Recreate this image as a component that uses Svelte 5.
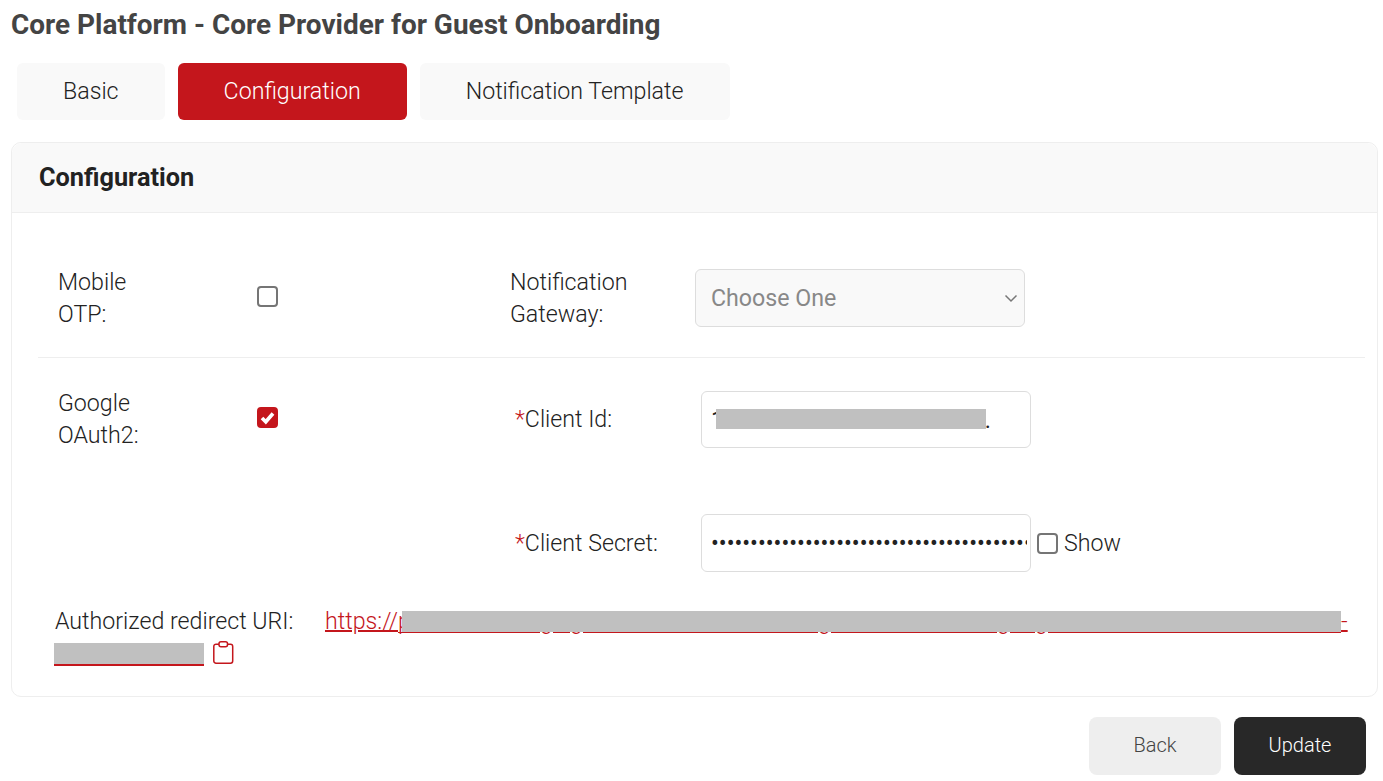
<script>
    let mobileOtp = $state(false);
    let googleAuth = $state(true);
    let showSecret = $state(false);
    let clientId = '100000000000000000000.';
    let clientSecret = 'abcdefghijklmnopqrstuvwxyz0123456789abcdefghijklmnop';
    let activeTab = $state('Configuration');
    const tabs = ['Basic', 'Configuration', 'Notification Template'];
    // descenders that stick out below the grey block of the uri
    const tails = [142, 172, 420, 599, 637];
</script>

<div class="page">
    <h1>Core Platform - Core Provider for Guest Onboarding</h1>

    <div class="tabs">
        {#each tabs as tab (tab)}
            <button class="tab" class:active={activeTab === tab} onclick={() => (activeTab = tab)}>{tab}</button>
        {/each}
    </div>

    <section class="card">
        <header class="card-header">Configuration</header>

        <div class="card-body">
            <div class="row first">
                <label class="label left" for="mobile">Mobile<br>OTP:</label>
                <div class="check-col">
                    <label class="check">
                        <input id="mobile" type="checkbox" bind:checked={mobileOtp}>
                        <span class="box"></span>
                    </label>
                </div>
                <label class="label gateway-label" for="gateway">Notification<br>Gateway:</label>
                <div class="select-wrap">
                    <select id="gateway" disabled>
                        <option>Choose One</option>
                    </select>
                    <svg class="chevron" viewBox="0 0 16 16" width="16" height="16">
                        <path d="M2.500 5.500 8 11l5.500-5.500" fill="none" stroke="#777" stroke-width="1.500"/>
                    </svg>
                </div>
            </div>

            <div class="row second">
                <label class="label left" for="google">Google<br>OAuth2:</label>
                <div class="check-col">
                    <label class="check">
                        <input id="google" type="checkbox" bind:checked={googleAuth}>
                        <span class="box"></span>
                    </label>
                </div>
                <div class="client">
                    <div class="field">
                        <label class="label client-label id-label" for="client-id"><span class="req">*</span>Client Id:</label>
                        <div class="input-wrap">
                            <input id="client-id" type="text" value={clientId}>
                            <span class="id-redact"></span>
                        </div>
                    </div>
                    <div class="field">
                        <label class="label client-label" for="client-secret"><span class="req">*</span>Client Secret:</label>
                        <input
                            id="client-secret"
                            class="secret"
                            type={showSecret ? 'text' : 'password'}
                            value={clientSecret}
                        >
                        <label class="check show">
                            <input type="checkbox" bind:checked={showSecret}>
                            <span class="box"></span>
                            <span class="show-text">Show</span>
                        </label>
                    </div>
                </div>
            </div>

            <div class="redirect">
                <span class="redirect-label">Authorized redirect URI:</span>
                <a href="#uri" class="uri">https://<span class="hidden-a"><span class="tail stem">p</span>{#each tails as left (left)}<span class="tail" style="left: {left}px">g</span>{/each}</span>-<span class="hidden-b"></span></a>
                <button class="copy" aria-label="Copy">
                    <svg viewBox="0 0 21 23" width="21" height="23">
                        <path d="M6 4H3a2.200 2.200 0 0 0-2.200 2.200v14.600A2.200 2.200 0 0 0 3 23h14.500a2.200 2.200 0 0 0 2.200-2.200V6.200A2.200 2.200 0 0 0 17.500 4h-3" transform="translate(0 -.800)" fill="none" stroke="#c4161c" stroke-width="1.500"/>
                        <rect x="6" y=".800" width="8.500" height="5" rx="2" fill="none" stroke="#c4161c" stroke-width="1.500"/>
                    </svg>
                </button>
            </div>
        </div>
    </section>

    <div class="actions">
        <button class="btn back">Back</button>
        <button class="btn update">Update</button>
    </div>
</div>

<style>
    :global(body) {
        margin: 0;
        background: #fff;
        font-family: Roboto, "Liberation Sans", sans-serif;
    }

    .page {
        padding: 0 5px 0 11px;
        height: 781px;
        box-sizing: border-box;
        overflow: hidden;
    }

    h1 {
        margin: 0;
        padding-top: 9px;
        font-size: 27.95px;
        line-height: 31px;
        font-weight: 700;
        color: #444;
    }

    .tabs {
        display: flex;
        gap: 13px;
        margin: 23px 0 22px 6px;
    }

    .tab {
        height: 57px;
        border: 0;
        border-radius: 6px;
        background: #f9f9f9;
        color: #222;
        font: 300 23.2px Roboto, sans-serif;
        padding: 0 46px 1px;
    }

    .tab.active {
        background: #c4161c;
        color: #fff;
    }

    .card {
        width: 1367px;
        height: 555px;
        box-sizing: border-box;
        border: 1px solid #eee;
        border-radius: 10px;
    }

    .card-header {
        height: 69px;
        padding-left: 27px;
        background: #f9f9f9;
        border-bottom: 1px solid #eee;
        border-radius: 10px 10px 0 0;
        font-size: 25.3px;
        font-weight: 700;
        line-height: 69px;
        color: #222;
    }

    .card-body {
        padding: 0 12px 0 26px;
    }

    .row {
        display: flex;
    }

    .first {
        height: 145px;
        padding-top: 53px;
        box-sizing: border-box;
        border-bottom: 1px solid #eee;
    }

    .second {
        height: 253px;
        padding-top: 29px;
        box-sizing: border-box;
    }

    .label {
        font-size: 23.2px;
        font-weight: 300;
        line-height: 32px;
        color: #222;
    }

    .left {
        width: 199px;
        margin-left: 20px;
    }

    .check-col {
        width: 253px;
        padding-top: 20px;
    }

    .check {
        display: inline-flex;
        align-items: center;
        position: relative;
    }

    .check input {
        position: absolute;
        opacity: 0;
        width: 21px;
        height: 21px;
        margin: 0;
    }

    .box {
        width: 21px;
        height: 21px;
        box-sizing: border-box;
        border: 2px solid #757575;
        border-radius: 4px;
        background: #fff;
        display: block;
    }

    .check input:checked + .box {
        border-color: #c4161c;
        background: #c4161c url("data:image/svg+xml,%3Csvg xmlns='http://www.w3.org/2000/svg' viewBox='0 0 21 21'%3E%3Cpath d='M5 11l3.800 3.800L16 6.500' fill='none' stroke='%23fff' stroke-width='3.600'/%3E%3C/svg%3E") center / 21px 21px no-repeat;
    }

    .gateway-label {
        width: 185px;
    }

    .select-wrap {
        position: relative;
        width: 330px;
        height: 58px;
        margin-top: 3px;
    }

    select {
        width: 100%;
        height: 100%;
        appearance: none;
        border: 1px solid #ddd;
        border-radius: 6px;
        background: #f9f9f9;
        color: #888;
        padding: 0 15px;
        font: 400 23.2px Roboto, sans-serif;
        opacity: 1;
    }

    .chevron {
        position: absolute;
        right: 6px;
        top: 21px;
    }

    .client {
        margin: 4px 0 0 5px;
        display: flex;
        flex-direction: column;
        gap: 66px;
    }

    .field {
        display: flex;
        align-items: center;
    }

    .client-label {
        width: 186px;
    }

    .id-label {
        padding-bottom: 2px;
    }

    .req {
        color: #c4161c;
    }

    .input-wrap {
        position: relative;
    }

    input[type="text"], input[type="password"] {
        box-sizing: border-box;
        width: 330px;
        height: 57px;
        border: 1px solid #ddd;
        border-radius: 6px;
        padding: 0 3px 0 9px;
        font: 400 23.2px Roboto, sans-serif;
        color: #222;
        outline: none;
    }

    .secret {
        height: 58px !important;
    }

    .id-redact {
        position: absolute;
        background: #c0c0c0;
        left: 15px;
        top: 18px;
        width: 270px;
        height: 20px;
    }

    .show {
        margin-left: 6px;
        gap: 6px;
    }

    .show-text {
        font-size: 23.2px;
        font-weight: 300;
        color: #222;
    }

    .redirect {
        margin: -6px 0 0 17px;
        font-size: 23.2px;
        font-weight: 300;
        line-height: 32px;
        color: #222;
    }

    .redirect-label {
        margin-right: 26px;
    }

    .uri {
        color: #c4161c;
        text-decoration: underline;
        text-decoration-thickness: 2px;
    }

    .hidden-a {
        position: relative;
        display: inline-block;
        width: 943px;
        height: 21px;
        border-bottom: 1px solid #c4161c;
        vertical-align: -4px;
    }

    .hidden-a::after {
        content: "";
        position: absolute;
        left: 4px;
        right: 0;
        top: 0;
        height: 21px;
        background: #c0c0c0;
    }

    .tail {
        position: absolute;
        top: -6px;
        height: 32px;
        line-height: 32px;
        background: #fff;
    }

    .stem {
        left: 0;
        background: none;
    }

    .hidden-b {
        display: inline-block;
        width: 150px;
        height: 21px;
        margin-left: -1px;
        background: #c0c0c0;
        border-bottom: 2px solid #c4161c;
        vertical-align: -5px;
    }

    .copy {
        border: 0;
        background: none;
        padding: 0;
        margin-left: 3px;
        vertical-align: -3px;
    }

    .actions {
        display: flex;
        justify-content: flex-end;
        gap: 13px;
        margin: 20px 12px 0 0;
    }

    .btn {
        width: 132px;
        height: 58px;
        border: 0;
        border-radius: 8px;
        padding: 0 0 2px;
        font: 300 20px Roboto, sans-serif;
    }

    .back {
        background: #eee;
        color: #444;
    }

    .update {
        background: #282828;
        color: #fff;
    }
</style>
